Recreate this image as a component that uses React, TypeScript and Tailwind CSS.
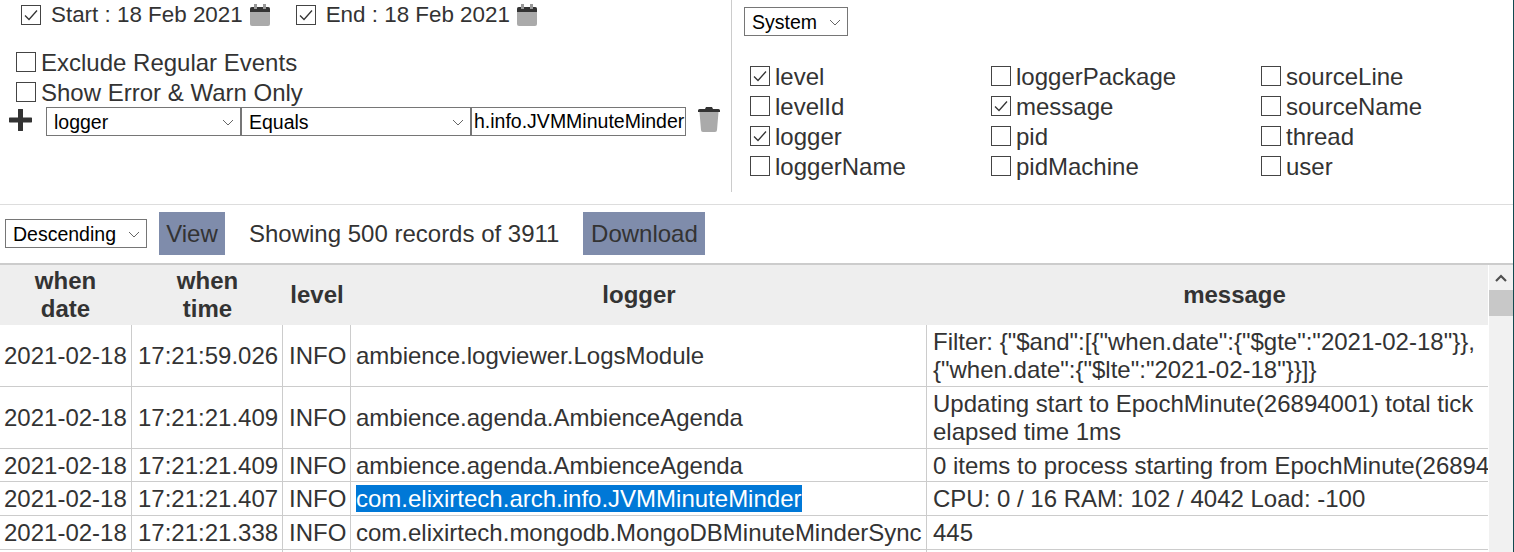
/**
 * LogViewer - filter panel, column picker and log records table
 */

const COLUMN_PICKS = [
  { label: 'level', checked: true },
  { label: 'loggerPackage', checked: false },
  { label: 'sourceLine', checked: false },
  { label: 'levelId', checked: false },
  { label: 'message', checked: true },
  { label: 'sourceName', checked: false },
  { label: 'logger', checked: true },
  { label: 'pid', checked: false },
  { label: 'thread', checked: false },
  { label: 'loggerName', checked: false },
  { label: 'pidMachine', checked: false },
  { label: 'user', checked: false },
];

const RECORDS = [
  {
    date: '2021-02-18',
    time: '17:21:59.026',
    logger: 'ambience.logviewer.LogsModule',
    message: 'Filter: {"$and":[{"when.date":{"$gte":"2021-02-18"}}, {"when.date":{"$lte":"2021-02-18"}}]}',
  },
  {
    date: '2021-02-18',
    time: '17:21:21.409',
    logger: 'ambience.agenda.AmbienceAgenda',
    message: 'Updating start to EpochMinute(26894001) total tick elapsed time 1ms',
  },
  {
    date: '2021-02-18',
    time: '17:21:21.409',
    logger: 'ambience.agenda.AmbienceAgenda',
    message: '0 items to process starting from EpochMinute(26894001)',
    tight: true,
  },
  {
    date: '2021-02-18',
    time: '17:21:21.407',
    logger: 'com.elixirtech.arch.info.JVMMinuteMinder',
    message: 'CPU: 0 / 16 RAM: 102 / 4042 Load: -100',
    selected: true,
  },
  {
    date: '2021-02-18',
    time: '17:21:21.338',
    logger: 'com.elixirtech.mongodb.MongoDBMinuteMinderSync',
    message: '445',
  },
];

function CheckBox({ checked }: { checked?: boolean }) {
  return (
    <span className="flex h-[20px] w-[20px] shrink-0 items-center justify-center border border-[#444] bg-white">
      {checked && (
        <svg width="16" height="14" viewBox="0 0 16 14" fill="none">
          <path d="M2 7.5 L6 11.5 L14 2.5" stroke="#333" strokeWidth="1.3" />
        </svg>
      )}
    </span>
  );
}

function CalendarIcon() {
  return (
    <svg width="20" height="22" viewBox="0 0 20 22" className="shrink-0">
      <rect x="0" y="3" width="20" height="19" rx="2" fill="#aaaaaa" />
      <path d="M0 8 V5 a2 2 0 0 1 2 -2 h16 a2 2 0 0 1 2 2 V8 Z" fill="#333333" />
      <rect x="4" y="0" width="3" height="5" fill="#999999" />
      <rect x="13" y="0" width="3" height="5" fill="#999999" />
    </svg>
  );
}

function TrashIcon() {
  return (
    <svg width="24" height="25" viewBox="0 0 24 25" className="shrink-0">
      <path d="M2.5 5 H21.5 L20 23 a2 2 0 0 1 -2 2 H6 a2 2 0 0 1 -2 -2 Z" fill="#aaaaaa" />
      <path d="M1 5 V3.5 a1.5 1.5 0 0 1 1.5 -1.5 H8 L9 0 H15 L16 2 H21.5 a1.5 1.5 0 0 1 1.5 1.5 V5 Z" fill="#333333" />
    </svg>
  );
}

function PlusIcon() {
  return (
    <svg width="23" height="22" viewBox="0 0 23 22" className="shrink-0">
      <path d="M11.5 1 V21 M1 11 H22" stroke="#333333" strokeWidth="5" strokeLinecap="round" />
    </svg>
  );
}

function Chevron() {
  return (
    <svg
      width="12"
      height="7"
      viewBox="0 0 12 7"
      fill="none"
      className="pointer-events-none absolute right-[7px] top-[12px]"
    >
      <path d="M1 1 L6 6 L11 1" stroke="#666" strokeWidth="1" />
    </svg>
  );
}

function SelectBox({ value, className }: { value: string; className: string }) {
  return (
    <div className={`relative h-[29px] shrink-0 ${className}`}>
      <select
        defaultValue={value}
        className="block h-full w-full appearance-none border border-[#767676] bg-white pl-[7px] pt-[2px] text-[19.5px] leading-[25px] text-black"
      >
        <option>{value}</option>
      </select>
      <Chevron />
    </div>
  );
}

function DateCheck({ label }: { label: string }) {
  return (
    <div className="flex items-center">
      <CheckBox checked />
      <span className="ml-[10px] mr-[7px] text-[22.4px]">{label}</span>
      <CalendarIcon />
    </div>
  );
}

export default function App() {
  return (
    <div className="flex h-[552px] w-full flex-col overflow-hidden border-r border-[#124a50] bg-white font-['Liberation_Sans',sans-serif] text-[24px] text-[#333]">
      <div className="flex h-[204px] shrink-0">
        <div className="h-[192px] w-[732px] shrink-0 border-r border-[#ccc]">
          <div className="flex h-[28px] items-center gap-[26px] pl-[21px] pt-[1px]">
            <DateCheck label="Start : 18 Feb 2021" />
            <DateCheck label="End : 18 Feb 2021" />
          </div>
          <div className="mt-[19px] flex h-[30px] items-center pl-[16px]">
            <CheckBox />
            <span className="ml-[5px] mt-[2px]">Exclude Regular Events</span>
          </div>
          <div className="flex h-[30px] items-center pl-[16px]">
            <CheckBox />
            <span className="ml-[5px] mt-[2px]">Show Error &amp; Warn Only</span>
          </div>
          <div className="flex h-[29px] items-center pl-[9px]">
            <span className="mb-[4px] mr-[14px] flex">
              <PlusIcon />
            </span>
            <SelectBox value="logger" className="w-[195px]" />
            <SelectBox value="Equals" className="w-[230px]" />
            <input
              readOnly
              value="h.info.JVMMinuteMinder"
              className="block h-[29px] w-[215px] shrink-0 border border-[#767676] bg-white pl-[2px] text-[19.5px] text-black"
            />
            <span className="mb-[4px] ml-[11px] flex">
              <TrashIcon />
            </span>
          </div>
        </div>
        <div className="flex-1 pl-[12px] pt-[7px]">
          <SelectBox value="System" className="w-[104px]" />
          <div className="ml-[6px] mt-[25px] grid grid-cols-[241px_270px_auto]">
            {COLUMN_PICKS.map((pick) => (
              <div key={pick.label} className="flex h-[30px] items-center">
                <CheckBox checked={pick.checked} />
                <span className="ml-[5px] mt-[2px]">{pick.label}</span>
              </div>
            ))}
          </div>
        </div>
      </div>

      <div className="flex h-[59px] shrink-0 items-center border-t border-[#ddd] pb-[1px] pl-[5px]">
        <SelectBox value="Descending" className="w-[142px]" />
        <button className="ml-[12px] h-[43px] w-[66px] bg-[#7f8cab]">View</button>
        <span className="ml-[24px]">Showing 500 records of 3911</span>
        <button className="ml-[24px] h-[43px] w-[122px] bg-[#7f8cab]">Download</button>
      </div>

      <div className="flex min-h-0 flex-1 border-t-2 border-[#ccc]">
        <div className="min-w-0 flex-1 overflow-hidden">
          <table className="w-[1542px] table-fixed border-separate border-spacing-0 leading-[28px]">
            <colgroup>
              <col className="w-[132px]" />
              <col className="w-[151px]" />
              <col className="w-[68px]" />
              <col className="w-[576px]" />
              <col className="w-[615px]" />
            </colgroup>
            <thead>
              <tr className="bg-[#eeeeee] font-bold">
                <th className="py-[2px] pr-[1px]">when<br />date</th>
                <th className="py-[2px]">when<br />time</th>
                <th className="py-[2px]">level</th>
                <th className="py-[2px]">logger</th>
                <th className="py-[2px]">message</th>
              </tr>
            </thead>
            <tbody>
              {RECORDS.map((record, i) => {
                const pad = record.tight ? 'pb-[1px] pt-[3px] whitespace-nowrap' : 'pb-[2px] pt-[3px]';
                return (
                  <tr key={i}>
                    <td className={`border-b border-r border-[#ccc] pl-[4px] whitespace-nowrap ${pad}`}>{record.date}</td>
                    <td className={`border-b border-r border-[#ccc] pl-[6px] whitespace-nowrap ${pad}`}>{record.time}</td>
                    <td className={`border-b border-r border-[#ccc] pl-[6px] whitespace-nowrap ${pad}`}>INFO</td>
                    <td className={`border-b border-r border-[#ccc] pl-[5px] whitespace-nowrap ${pad}`}>
                      {record.selected ? (
                        <span className="bg-[#0078d7] text-white">{record.logger}</span>
                      ) : (
                        record.logger
                      )}
                    </td>
                    <td className={`border-b border-[#ccc] pl-[6px] pr-[5px] ${pad}`}>{record.message}</td>
                  </tr>
                );
              })}
              <tr className="h-[10px]">
                <td className="border-r border-[#ccc]" />
                <td className="border-r border-[#ccc]" />
                <td className="border-r border-[#ccc]" />
                <td className="border-r border-[#ccc]" />
                <td />
              </tr>
            </tbody>
          </table>
        </div>
        <div className="w-[25px] shrink-0 border-l border-white bg-[#f1f1f1]">
          <div className="flex h-[25px] items-center justify-center">
            <svg width="12" height="8" viewBox="0 0 12 8" fill="none">
              <path d="M1 7 L6 2 L11 7" stroke="#505050" strokeWidth="2.2" />
            </svg>
          </div>
          <div className="h-[26px] w-[24px] bg-[#c8c8c8]" />
        </div>
      </div>
    </div>
  );
}
